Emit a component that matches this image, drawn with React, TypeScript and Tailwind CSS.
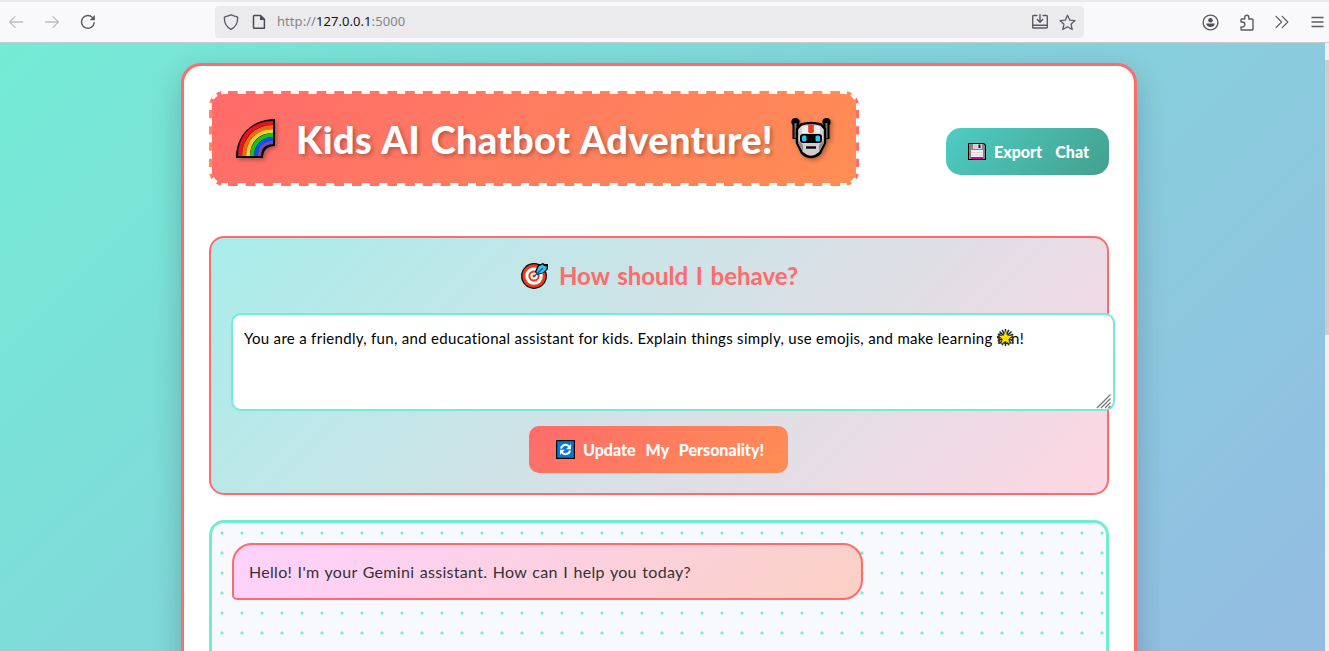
import React from "react";

type LineProps = { className: string; children: React.ReactNode };

/** One line of text whose words are spread over the element's own width. */
function Line({ className, children }: LineProps) {
  return (
    <span className={`block whitespace-nowrap [text-align-last:justify] font-['Lato',sans-serif] ${className}`}>
      {children}
    </span>
  );
}

function BrowserBar() {
  return (
    <header className="flex h-[43px] shrink-0 items-center border-t-2 border-b border-t-[#eaeaed] border-b-[#c9c9cc] bg-[#f9f9fb] text-[#5b5b66]">
      <div className="flex w-[215px] items-center gap-5 pl-2">
        <svg width="16" height="16" viewBox="0 0 16 16" fill="none" stroke="#bdbdc4" strokeWidth="1.3" strokeLinecap="round" strokeLinejoin="round">
          <path d="M14.5 8H1.7M7 2.6 1.6 8 7 13.4" />
        </svg>
        <svg width="16" height="16" viewBox="0 0 16 16" fill="none" stroke="#bdbdc4" strokeWidth="1.3" strokeLinecap="round" strokeLinejoin="round">
          <path d="M1.5 8h12.8M9 2.6 14.4 8 9 13.4" />
        </svg>
        <svg width="16" height="16" viewBox="0 0 16 16" fill="none" stroke="#5b5b66" strokeWidth="1.4" strokeLinecap="round">
          <path d="M14.2 8.6A6.4 6.4 0 1 1 12.6 3.6" />
          <path d="M14.9 1v5.2H9.6z" fill="#5b5b66" stroke="none" />
        </svg>
      </div>
      <div className="flex h-8 w-[869px] items-center rounded bg-[#ebebed] pr-2 pl-2">
        <svg width="16" height="16" viewBox="0 0 16 16" fill="none" stroke="#5b5b66" strokeWidth="1.3" strokeLinejoin="round">
          <path d="M8 .8 14.6 3.2c.3 5.400-1.700 9.600-6.600 12.100C3.100 12.800 1.100 8.600 1.400 3.200z" />
        </svg>
        <svg className="ml-3" width="16" height="16" viewBox="0 0 16 16" fill="none" stroke="#4b4b55" strokeWidth="1.5" strokeLinejoin="round">
          <path d="M3.300 1.500H9.500L13.400 5.400V14.300H3.300a.8.8 0 0 1-.8-.8V2.300a.8.8 0 0 1 .8-.8z" />
          <path d="M9 1v5h5z" fill="#4b4b55" stroke="none" />
        </svg>
        <span className="ml-[10px] font-['Noto_Sans','Open_Sans',sans-serif] text-[13px] tracking-[0.06px] text-[#858589]">
          http://<span className="text-[#15141a]">127.0.0.1</span>:5000
        </span>
        <svg className="ml-auto" width="18" height="16" viewBox="0 0 18 16" fill="none" stroke="#5b5b66" strokeWidth="1.4" strokeLinecap="round" strokeLinejoin="round">
          <path d="M6 1.500H2.500a.8.8 0 0 0-.8.8V13.200a.8.8 0 0 0 .8.8h13a.8.8 0 0 0 .8-.8V2.300a.8.8 0 0 0-.8-.8H12M1.700 11.200h14.600M9 .6v7.200M6.300 5.500 9 8.200l2.700-2.700" />
        </svg>
        <svg className="ml-[10px]" width="17" height="17" viewBox="0 0 17 17" fill="none" stroke="#5b5b66" strokeWidth="1.3" strokeLinejoin="round">
          <path d="m8.500 1.200 2.200 4.900 5.300.5-4 3.600 1.200 5.300-4.700-2.800-4.700 2.800L5 10.200 1 6.600l5.300-.5z" />
        </svg>
      </div>
      <div className="flex flex-1 items-center justify-end pr-[5px]">
        <svg width="17" height="17" viewBox="0 0 17 17" fill="#4f4f5a">
          <circle cx="8.500" cy="8.500" r="7.400" fill="none" stroke="#5b5b66" strokeWidth="1.400" />
          <circle cx="8.500" cy="6.200" r="2.300" />
          <path d="M4.300 9.600h8.400c0 2.100-1.800 3.400-4.200 3.400S4.300 11.700 4.300 9.600z" />
        </svg>
        <svg className="ml-5" width="16" height="17" viewBox="0 0 16 17" fill="none" stroke="#5b5b66" strokeWidth="1.400" strokeLinejoin="round">
          <path d="M2 8V5.800c0-.5.300-.8.8-.8h3V3.200a2 2 0 0 1 4 0V5h3.400c.5 0 .8.300.8.800v9.400c0 .5-.3.800-.8.800H2.800c-.5 0-.8-.3-.8-.8V13h1.300a2 2 0 0 0 0-5z" />
        </svg>
        <svg className="ml-[19px]" width="16" height="14" viewBox="0 0 16 14" fill="none" stroke="#5b5b66" strokeWidth="1.200" strokeLinecap="round" strokeLinejoin="round">
          <path d="m2 1.300 5.600 5.700L2 12.700M8.200 1.300 13.800 7l-5.600 5.700" />
        </svg>
        <svg className="ml-[21px]" width="13" height="12" viewBox="0 0 13 12" stroke="#5b5b66" strokeWidth="1.300">
          <path d="M.5 1.500h12M.5 6h12M.5 10.500h12" />
        </svg>
      </div>
    </header>
  );
}

function Rainbow() {
  return (
    <svg className="drop-shadow-[2px_2px_2px_rgba(0,0,0,0.3)]" width="40" height="40" viewBox="0 0 40 40">
      <path d="M0 39C0 16 16 0 39 0V27C31 27 27 31 27 39z" fill="#000" />
      <g fill="none" strokeWidth="4">
        <path d="M4 37C4 17 17 4 37 4" stroke="#e81224" />
        <path d="M8 37C8 20 20 8 37 8" stroke="#f7630c" />
        <path d="M12 37c0-15 10-25 25-25" stroke="#ffc83d" />
        <path d="M16 37c0-12 9-21 21-21" stroke="#16c60c" />
        <path d="M20 37c0-10 7-17 17-17" stroke="#0050ef" />
        <path d="M23.500 37C23.500 28 29 23.500 37 23.500" stroke="#744da9" strokeWidth="3.500" />
      </g>
    </svg>
  );
}

function Robot() {
  return (
    <svg className="drop-shadow-[2px_2px_2px_rgba(0,0,0,0.3)]" width="40" height="41" viewBox="0 0 40 41">
      <path d="M4.500 5v16M35.500 5v16" stroke="#000" strokeWidth="6" />
      <circle cx="4.500" cy="4" r="4.200" />
      <circle cx="35.500" cy="4" r="4.200" />
      <path d="M4.500 5v15M35.500 5v15" stroke="#777" strokeWidth="2" />
      <path d="M6 11 10 6.500Q20 3.500 30 6.500L34 11V25L29 35Q20 43 11 35L6 25z" fill="#cfcfcf" stroke="#000" strokeWidth="2.400" />
      <path d="M7 14V25l5 9V27L7 22z" fill="#8c8c8c" />
      <path d="M33 14V25l-5 9V27l5-5z" fill="#8c8c8c" />
      <path d="M11 8h6v7h-6zM23 8h6v7h-6z" fill="#ededed" />
      <path d="M17.300 6.500h5.400v7l-1.200 1.500h-3l-1.200-1.500z" fill="#f03a17" />
      <rect x="9" y="16" width="22" height="9" rx="3" />
      <rect x="11" y="17.500" width="4.500" height="6" rx="1.500" fill="#31c4f5" />
      <rect x="24.500" y="17.500" width="4.500" height="6" rx="1.500" fill="#31c4f5" />
      <path d="M15 29.500h10" stroke="#000" strokeWidth="2.400" />
    </svg>
  );
}

function Floppy() {
  return (
    <svg width="18" height="17" viewBox="0 0 18 17">
      <path d="M0 0h16l2 2v15H0z" />
      <path d="M1 1h14.500L17 2.500V16H1z" fill="#8b8186" />
      <path d="M5 1h9v5H5z" fill="#d5d0d5" />
      <path d="M10.500 1.500h2v3.500h-2z" fill="#222" />
      <path d="M3 7h12v8H3z" fill="#f3f3f5" />
      <path d="M3 9.500h12M3 12h12" stroke="#ccc" strokeWidth=".7" />
      <path d="M3 14h12v2H3z" fill="#e3008c" />
    </svg>
  );
}

function Target() {
  return (
    <svg width="27" height="26" viewBox="0 0 27 26">
      <circle cx="13" cy="13" r="12.900" />
      <circle cx="13" cy="13" r="11.700" fill="#f03a17" />
      <circle cx="13" cy="13" r="8.800" fill="#fff" />
      <circle cx="13" cy="13" r="5.600" fill="#f03a17" />
      <circle cx="13" cy="13" r="3.600" fill="#fff" />
      <circle cx="13" cy="13" r="1.500" fill="#f03a17" />
      <path d="M14 8.500 17 2l5-2 1.500 1H27v5l-4 4-7 2z" />
      <path d="m15.300 9 2.500-5.700L22 1.500l.8 1.500 3 .5-.4 2.500-3.200 3.500-5.700 1.200z" fill="#31c4f5" />
      <path d="M13 13.500 22 5" stroke="#0063b1" strokeWidth="1.500" />
    </svg>
  );
}

function Refresh() {
  return (
    <svg width="19" height="19" viewBox="0 0 19 19">
      <path d="M0 0h19v19H0z" />
      <path d="M1.200 1.200h16.600v16.600H1.200z" fill="#0078d7" />
      <g fill="none" stroke="#fff" strokeWidth="2">
        <path d="M5 8.500C5.800 4.500 11 3.500 13.500 7" />
        <path d="M14 10.500c-.8 4-6 5-8.500 1.500" />
      </g>
      <path d="M15 4v5.200h-5zM4 15V9.800h5z" fill="#fff" />
    </svg>
  );
}

function GlowingStar() {
  return (
    <svg width="17" height="17" viewBox="0 0 17 17">
      <path d="M8.500 0v17M0 8.500h17M2.500 2.500l12 12M14.500 2.500l-12 12M5.200.8l6.600 15.400M11.800.8 5.200 16.200M.8 5.200l15.400 6.600M.8 11.800 16.200 5.200" stroke="#1d2c33" strokeWidth="1.500" />
      <path d="m8.500 1.500 2 4.700 5.200.5-4 3.400 1.300 5-4.500-2.700-4.500 2.700 1.300-5-4-3.400 5.200-.5z" fill="#ffe000" stroke="#4a4410" strokeWidth=".7" />
    </svg>
  );
}

/** Dashed white frame: each side and each corner has its own dash rhythm. */
function DashedFrame() {
  return (
    <svg className="pointer-events-none absolute -top-[3px] -left-[3px]" width="650" height="95" viewBox="0 0 650 95" fill="none" stroke="#fff" strokeWidth="3">
      <path d="M15 1.500H635M15 93.500H635" strokeDasharray="8 9.714" strokeDashoffset="4" />
      <path d="M1.500 15V80M648.500 15V80" strokeDasharray="8 8.250" strokeDashoffset="4" />
      <path
        d="M1.500 15A13.500 13.500 0 0 1 15 1.500M635 1.500A13.500 13.500 0 0 1 648.500 15M648.500 80A13.500 13.500 0 0 1 635 93.500M15 93.500A13.500 13.500 0 0 1 1.500 80"
        strokeDasharray="6 4.600"
        strokeDashoffset="3"
      />
    </svg>
  );
}

function Header() {
  return (
    <div className="flex h-[95px] items-start justify-between">
      <h1 className="relative flex h-[95px] w-[650px] items-center rounded-[15px] border-[3px] border-transparent bg-[linear-gradient(135deg,#ff6b6b,#ff8e53)] pl-6">
        <DashedFrame />
        <Rainbow />
        <Line className="ml-5 w-[477px] text-[38px] leading-[50px] font-black tracking-[0.3px] text-white [text-shadow:2px_2px_4px_rgba(0,0,0,0.3)]">
          Kids AI Chatbot Adventure!
        </Line>
        <span className="ml-[18px]"><Robot /></span>
      </h1>
      <button className="mt-[37px] flex h-[47px] w-[163px] items-center rounded-[15px] bg-[linear-gradient(135deg,#4ecdc4,#44a08d)] pl-[22px]">
        <Floppy />
        <Line className="ml-2 w-[95px] text-base font-black text-white">Export Chat</Line>
      </button>
    </div>
  );
}

function PersonalityPanel() {
  return (
    <section className="mt-[50px] h-[259px] rounded-[15px] border-2 border-[#ff6b6b] bg-[linear-gradient(135deg,#a8edea,#fed6e3)] pl-5">
      <h2 className="flex h-[75px] items-center pl-[290px]">
        <Target />
        <Line className="ml-[11px] w-[239px] text-[24px] leading-8 font-bold text-[#ff6b6b]">How should I behave?</Line>
      </h2>
      <div className="relative flex h-[98px] w-[884px] items-start rounded-[10px] border-2 border-[#74ebd5] bg-white pt-[13px] pl-[11px]">
        <Line className="w-[748px] text-[15px] leading-5 tracking-[0.3px] text-black">
          You are a friendly, fun, and educational assistant for kids. Explain things simply, use emojis, and make learning fun!
        </Line>
        <span className="mt-px ml-[5px]"><GlowingStar /></span>
        <svg className="absolute right-0.5 bottom-0" width="15" height="15" viewBox="0 0 15 15" stroke="#777" strokeWidth="1.300">
          <path d="M1 14 14.500.5M5 14l9.500-9.500M9 14l5.500-5.500M12.500 14l2-2" />
        </svg>
      </div>
      <button className="mt-[15px] ml-[298px] flex h-[47px] w-[259px] items-center rounded-[10px] bg-[linear-gradient(135deg,#ff6b6b,#ff8e53)] pl-[27px]">
        <Refresh />
        <Line className="ml-2 w-[181px] text-base font-black text-white">Update My Personality!</Line>
      </button>
    </section>
  );
}

function Chat() {
  return (
    <section className="mt-[25px] h-[400px] rounded-[15px] border-[3px] border-[#74ebd5] bg-[#f8f9fc] bg-[radial-gradient(circle,#74ebd5_1px,transparent_2px)] bg-[length:20px_20px] p-5">
      <div className="flex h-[57px] w-[631px] items-center rounded-[20px] rounded-bl-[5px] border-2 border-[#ff6b6b] bg-[linear-gradient(135deg,#ffd1ff,#fad0c4)] pl-[15px]">
        <Line className="w-[442px] text-base tracking-[0.3px] text-[#333]">
          Hello! I'm your Gemini assistant. How can I help you today?
        </Line>
      </div>
    </section>
  );
}

export default function App() {
  return (
    <div className="flex h-[651px] w-full flex-col overflow-hidden">
      <BrowserBar />
      <div className="flex min-h-0 flex-1 overflow-hidden">
        <div className="h-[1270px] flex-1 bg-[linear-gradient(135deg,#74ebd5,#9face6)] pt-5 pl-[181px]">
          <main className="h-[1200px] w-[956px] rounded-[20px] border-[3px] border-[#ff6b6b] bg-white p-[25px] shadow-[0_10px_30px_rgba(0,0,0,0.2)]">
            <Header />
            <PersonalityPanel />
            <Chat />
          </main>
        </div>
        <div className="w-1 bg-[#f0f0f0] pt-[17px]">
          <div className="h-[275px] bg-[#cdcdcd]" />
        </div>
      </div>
    </div>
  );
}
